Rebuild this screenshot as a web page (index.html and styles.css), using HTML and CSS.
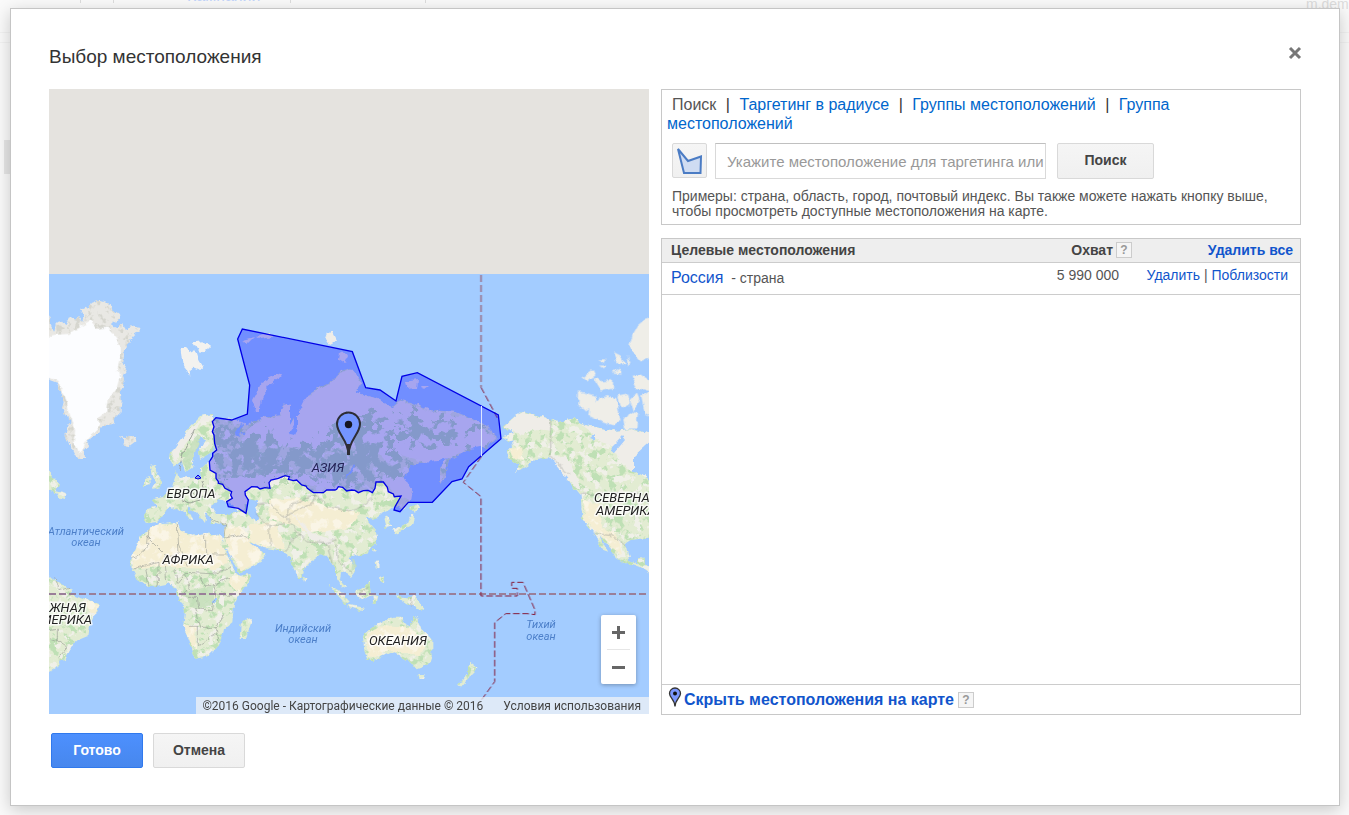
FILE: index.html
```html
<!DOCTYPE html>
<html lang="ru">
<head>
<meta charset="utf-8">
<title>Выбор местоположения</title>
<link rel="stylesheet" href="styles.css">
</head>
<body>
<div class="backdrop" aria-hidden="true">
  <span class="ghost ghost-link">Кампании</span>
  <span class="ghost ghost-user">m.dem</span>
  <i class="ghost-bar bar-a"></i><i class="ghost-bar bar-b"></i><i class="ghost-bar bar-c"></i><i class="ghost-bar bar-d"></i>
  <i class="ghost-rule"></i><i class="ghost-tab"></i>
</div>
<main class="dialog" role="dialog" aria-labelledby="title">
  <header class="dialog-head">
    <h1 id="title">Выбор местоположения</h1>
    <button class="close" type="button" aria-label="Закрыть"><svg width="14" height="14" viewBox="0 0 14 14"><path d="M2 2L12 12M12 2L2 12" stroke="#777" stroke-width="3"/></svg></button>
  </header>
  <div class="columns">
    <section class="map" aria-label="Карта">
      <svg class="map-art" viewBox="49 89 600 625" preserveAspectRatio="xMidYMid slice">
        <defs>
          <filter id="terrain" filterUnits="userSpaceOnUse" x="40" y="270" width="620" height="450" color-interpolation-filters="sRGB">
            <feTurbulence type="fractalNoise" baseFrequency=".12" numOctaves="4" seed="7" result="n"/>
            <feDisplacementMap in="SourceGraphic" in2="n" scale="6" xChannelSelector="R" yChannelSelector="G" result="land"/>
            <feColorMatrix in="n" values="0 0 0 0 .75  0 0 0 0 .88  0 0 0 0 .71  10 0 0 0 -5.2"/>
            <feComposite in2="land" operator="in" result="g"/>
            <feColorMatrix in="n" values="0 0 0 0 .94  0 0 0 0 .94  0 0 0 0 .91  0 12 0 0 -6.7"/>
            <feComposite in2="land" operator="in" result="w"/>
            <feMerge><feMergeNode in="land"/><feMergeNode in="g"/><feMergeNode in="w"/></feMerge>
          </filter>
          <filter id="dry" filterUnits="userSpaceOnUse" x="40" y="270" width="620" height="450" color-interpolation-filters="sRGB">
            <feTurbulence type="fractalNoise" baseFrequency=".1" numOctaves="4" seed="7" result="n"/>
            <feDisplacementMap in="SourceGraphic" in2="n" scale="6" xChannelSelector="R" yChannelSelector="G" result="land"/>
            <feColorMatrix in="n" values="0 0 0 0 .98  0 0 0 0 .96  0 0 0 0 .90  0 8 0 0 -4"/>
            <feComposite in2="land" operator="in" result="w"/>
            <feMerge><feMergeNode in="land"/><feMergeNode in="w"/></feMerge>
          </filter>
          <filter id="ice" filterUnits="userSpaceOnUse" x="40" y="270" width="620" height="450" color-interpolation-filters="sRGB">
            <feTurbulence type="fractalNoise" baseFrequency=".16" numOctaves="3" seed="3" result="n"/>
            <feDisplacementMap in="SourceGraphic" in2="n" scale="6" xChannelSelector="R" yChannelSelector="G" result="land"/>
            <feColorMatrix in="n" values="0 0 0 0 .84  0 0 0 0 .84  0 0 0 0 .81  7 0 0 0 -3.6"/>
            <feComposite in2="land" operator="in" result="g"/>
            <feMerge><feMergeNode in="land"/><feMergeNode in="g"/></feMerge>
          </filter>
          <filter id="rough" filterUnits="userSpaceOnUse" x="40" y="270" width="620" height="450">
            <feTurbulence type="fractalNoise" baseFrequency=".12" numOctaves="4" seed="7" result="n"/>
            <feDisplacementMap in="SourceGraphic" in2="n" scale="6" xChannelSelector="R" yChannelSelector="G"/>
          </filter>
          <filter id="patchy" filterUnits="userSpaceOnUse" x="40" y="270" width="620" height="450">
            <feTurbulence type="fractalNoise" baseFrequency=".09" numOctaves="5" seed="11" result="n"/>
            <feDisplacementMap in="SourceGraphic" in2="n" scale="40" xChannelSelector="R" yChannelSelector="G" result="p"/>
            <feColorMatrix in="n" values="0 0 0 0 0  0 0 0 0 0  0 0 0 0 0  0 0 14 0 -5.8"/>
            <feComposite in="p" operator="in"/>
          </filter>
        </defs>
        <rect x="49" y="89" width="600" height="185" fill="#e5e3df"/>
        <rect x="49" y="274" width="600" height="440" fill="#a3ccff"/>

        <g filter="url(#ice)">
          <g transform="translate(49 274) scale(.33333)" fill="#e9e8e4">
            <path d="M-20 120L8 135 5 150 15 170 20 150 35 140 50 150 60 130 75 135 80 145 90 125 100 140 105 125 90 105 105 98 120 105 125 90 150 80 185 90 190 105 210 120 213 135 200 140 185 150 205 165 220 150 225 165 250 155 270 158 272 170 250 185 235 215 225 240 222 270 235 290 220 300 228 330 215 350 218 380 215 400 215 415 200 430 190 450 160 460 145 480 125 490 115 515 103 530 105 555 90 555 75 540 60 510 50 480 55 455 68 440 50 425 40 400 45 380 35 350 20 325-20 310Z"/>
            <path d="M212 485L225 492 240 485 258 487 262 500 240 517 220 510 226 500z"/>
          </g>
        </g>
        <g filter="url(#rough)">
          <path transform="translate(49 274) scale(.33333)" fill="#f3f2ef" d="M395 222l20 0 8 15 15-8 10 30 12 20-10 10-18-8-10 8 2 20-12-25-12-15z M435 205L460 202 480 215 470 235 450 232z"/>
          <g transform="translate(449 274) scale(.33333)" fill="#efeee8">
            <path d="M565 155L585 138 610 130V250L578 265 560 245 540 222 553 175Z M495 235L515 245 530 272 508 268Z M533 250l15 12-10 12zM400 312L433 285 440 300 412 322Z M430 308L460 322 492 318 492 340 455 350Z M450 256l22 0-5 12zM490 298l20-14 5 18zM548 310L575 302 610 326V354L565 342Z M450 275l18 0-6 8z M390 352L442 365 434 395 412 412 388 392Z M422 398L452 372 475 363 502 373 515 442 490 454 450 440 418 425Z M508 368l30-6 5 27-27 14z M543 377l20-20 8 18-16 40z M577 368L610 348V428L588 418Z M541 415L567 420 562 464 528 464 523 440Z"/>
          </g>
          <path transform="translate(49 274) scale(.33333)" fill="#fcfdff" d="M-20 190L20 182 60 180 90 160 125 140 145 165 175 160 200 190 215 215 217 250 207 290 212 310 202 345 180 365 175 410 150 430 155 450 120 490 105 510 98 535 88 540 75 510 78 470 62 420 48 365 28 320-20 305Z"/>
        </g>

        <g filter="url(#terrain)" fill="#e2ecd2">
          <path d="M171 452L182 441 190 426 200 416 214 414V450L200 459 199 450 205 440 200 437 195 452 192 468 185 472 182 462 174 466 170 460Z"/>
          <path d="M146 509L157 507 154 499 163 497 172 487 177 471 179 479 192 478 202 476 201 469 207 463 210 461 215 450 212 418 232 420 248 426 246 432 238 432 245 435 243 427 262 418 280 415 285 403 290 405 290 425 296 415 305 405 307 395 315 390 330 382 340 372 350 368 362 382 355 392 375 398 392 408 400 400 410 402 430 410 455 412 470 418 485 425 497 437 488 447 475 445 465 452 450 460 445 478 440 484 440 468 452 453 425 462 412 465 403 480 412 490 410 500 403 510 395 505 389 510 379 515 374 519 365 517 369 522 376 530 377 542 369 552 352 557 347 558 356 570 351 577 346 573 341 572 340 580 346 588 341 586 336 578 336 567 331 563 327 555 321 554 312 560 304 570 302 577 299 579 294 570 291 558 284 553 279 550 264 548 249 542 252 547 266 553 259 563 249 568 240 573 229 554 222 544 225 525 211 522 209 515 206 512 204 523 196 512 188 506 193 521 190 520 185 512 178 508 167 509 162 517 157 522 149 523 145 520Z"/>
          <path d="M150 466L155 465 157 474 162 482 161 487 152 489 156 482 152 477Z M144 479l5-3 1 9-6 2z"/>
          <g transform="translate(49 494) scale(.33333)">
            <path d="M275 130L300 105 330 90 385 88 395 110 430 125 470 118 515 125 520 145 530 175 545 200 560 235 570 245 610 240 600 262 575 300 555 330 550 385 525 405 520 430 505 460 480 485 440 495 425 450 402 400 408 350 388 310 385 290 362 268 325 275 295 275 260 250 247 225 248 190 265 155Z M575 390L595 372 608 382 590 435 572 435Z"/>
            <path d="M-30 235L25 262 65 285 70 300 110 315 150 330 145 350 120 395 115 425 80 440 50 495 30 500 32 515-30 545Z"/>
            <path d="M-20-90L20-45 35-25 20-10-20-15Z M15-10L50 0 45 15 25 10Z"/>
          </g>
          <g transform="translate(249 480) scale(.33333)">
            <path d="M342 465L365 445 400 425 430 410 460 410 465 430 485 440 495 405 505 415 515 445 550 480V520L540 550 500 565 480 540 455 530 430 515 375 540 355 540 345 505Z M508 582L527 582 522 600 512 599Z M437 345L470 352 500 350 528 390 490 380 470 368Z M318 335L365 305 368 345 340 360 325 352Z M242 315L275 335 302 365 290 372 265 345Z M298 375L345 383 340 390 300 382Z M370 345L388 348 382 372 373 370Z M377 245L388 245 388 268 380 265Z M390 295L408 288 405 308 395 306Z M430 152L455 142 478 128 485 105 495 108 488 135 465 150 435 163Z M482 85L500 72 512 82 498 98Z M403 115L415 110 427 140 410 143Z M161 287L172 298 165 308Z M372 205l8 3-5 12z"/>
          </g>
          <g transform="translate(449 274) scale(.33333)">
            <path d="M165 455L200 425 225 412 305 435 330 445 380 430 395 450 440 460 500 470 545 465 610 480V495L555 545V590L610 620V790L545 798 530 808 540 858 565 868 575 848 590 848 590 870 610 890V905L570 878 500 853 490 828 450 783 475 830 460 825 433 778 400 738 395 663 360 620 340 580 300 550 260 555 240 570 195 600 215 570 175 550 175 530 200 500 180 505 160 490 195 480Z"/>
            <path d="M60 1163L85 1183 75 1198 60 1205Z M55 1198L62 1208 35 1240 25 1236Z"/>
          </g>
        </g>
        <g filter="url(#dry)" fill="#f5eed3">
          <path transform="translate(49 494) scale(.33333)" d="M275 132L300 107 330 92 383 91 395 112 430 127 470 120 513 127 520 145 530 175 540 205 500 225 400 222 330 215 250 225 250 190 265 155Z M540 250L598 243 570 300 545 270Z M405 390L440 400 440 470 425 450Z M110 318L148 333 140 360 120 350Z"/>
          <path d="M224 528L240 527 251 542 264 553 258 562 241 571 230 554Z M250 524L275 522 285 548 264 547 249 540Z M268 500L300 498 330 508 360 512 350 528 310 533 292 524 270 520Z"/>
          <path transform="translate(249 480) scale(.33333)" d="M348 470L400 435 470 440 500 460 530 485 515 525 470 520 430 510 380 530 358 530Z"/>
          <path transform="translate(449 274) scale(.33333)" d="M400 680L450 690 460 760 500 780 520 840 490 820 440 770 405 730Z M180 525L220 520 225 560 190 550Z"/>
        </g>
        <g filter="url(#rough)" fill="#efede8">
          <path transform="translate(449 274) scale(.33333)" d="M168 455L200 425 225 413 305 436 305 470 260 465 220 480 195 475Z M395 452L440 461 500 471 545 466 612 481V495L555 545V590L520 570 490 520 450 500 420 470Z M300 550L350 545 385 610 400 650 360 620Z"/>
          <path d="M245 432L262 419 280 416 285 403 290 405 290 425 300 410 307 396 315 391 330 383 340 373 350 369 361 382 355 392 375 398 392 408 400 401 430 411 470 419 496 437 485 446 465 450 450 458 425 462 400 455 390 465 370 445 320 450 280 445 240 440Z"/>
          <path d="M218 478L300 472 340 484 340 491 290 480 270 486 245 490 246 510 228 508 232 490Z M370 480L400 470 412 490 410 500 396 495 384 482Z"/>
          <path d="M290 510L312 540 334 545 332 540 314 534 298 518Z M172 452L190 428 205 416 214 415 214 420 200 423 184 445 175 463Z"/>
          <path d="M324 336l8-5 5 10-7 4zM340 352l8 4-3 7-6-4zM404 382l14-2-1 8-11 1zM422 386l6 1-4 3zM252 400L262 382 280 373 282 377 268 386 262 400 259 412 255 412Z M242 340l12-3-6 6zM256 336l14-3 2 4-10 2z"/>
        </g>
        <g filter="url(#patchy)" fill="#bedbb4">
          <path d="M216 430L262 436 300 448 320 440 350 418 380 415 395 440 405 470 395 478 340 484 285 474 260 478 222 474 216 450Z"/>
          <path d="M392 415L440 420 475 430 470 442 430 448 400 440Z"/>
        </g>
        <g filter="url(#rough)">
          <path fill="#c4dfba" d="M180 592L213 586 213 606 195 610Z M352 560l4 6-6 6zM182 462l14-28 5 3-11 31z" opacity=".8"/>
          <path fill="#a3ccff" d="M212 507L218 500 229 503 240 511 230 514 216 514Z M249 499L258 501 255 508 259 518 255 522 250 517 247 505Z M213 598l4 0 0 5-4 0zM610 448l12-12 3 4-10 12zM235 434l6-10 2 1-4 11zM345 478l7-6 3-8-8 10zM590 438l5-4 0 6zM289 434l6-9 0-14 3 2 0 14-4 8z"/>
        </g>

        <g class="borders" filter="url(#rough)">
          <path transform="translate(49 494) scale(.33333)" d="M300 105L295 160 265 185 248 190M295 130L350 185 390 180 385 90M390 150L415 215M470 118V180M470 180H530M250 225L290 215 330 205 330 240M345 195L350 265M375 225L385 265 410 235 500 240 545 220M325 240V275M290 225L300 275M410 240L420 280 400 310M455 245L470 275 495 275 500 300 490 350 450 345 445 310 410 310M500 300L550 305M440 345L455 400H500L525 360M445 400L445 455 470 440 500 420M500 400L510 440M495 275L540 250M420 400H450M0 410L25 405 25 440 0 430M20 250L30 290 60 280M25 440L55 460 30 490M530 90L525 130 570 120 600 135M480 70L530 95"/>
          <path transform="translate(249 480) scale(.33333)" d="M20 75L60 70 100 110 135 95 190 70 200 45 240 80 300 95 340 80 370 55M200 45L130 70 110 110 140 150 170 185 230 190 260 180M60 140L65 200M105 215L130 180 155 160M20 100L60 140 110 130M235 190L250 250M260 190L265 240 310 280M488 353V382M325 340L362 318"/>
          <path transform="translate(449 274) scale(.33333)" d="M305 435V550L325 570 360 600M395 660H600M435 778L490 785 530 815"/>
          <path d="M180 470L182 455 195 428M188 486L195 498 215 495M175 497L190 503 200 500M201 480L205 493"/>
        </g>

        <path class="equator" d="M49 594H649"/>
        <g transform="translate(449 274) scale(.33333)">
          <path class="date-line bold" d="M96 3V340"/>
          <path class="date-line" d="M96 340L147 435M97 548L43 625 96 668V966H205V943H188V925H222L258 1008V1022L235 1019H170L137 1046V1223L92 1285"/>
        </g>
        <path class="target" transform="translate(200 310) scale(.33333)" d="M113 87L127 57 457 125 497 233 540 240 588 273 606 199 652 188 895 315 903 386 806 470 786 507 756 515 697 577H625L600 605 582 600 585 590 603 558 583 560 580 552 565 545 562 532 550 516H528L525 535 517 548 505 541 490 542 475 548 465 541 455 540 440 543 428 532 415 530 410 538 405 540 380 540 370 548H340L322 535 318 528 305 525 290 510 280 512 265 508 268 500 255 497 235 505 213 510 207 518 210 535 195 533 180 537 172 531 155 530 135 545 136 555 145 570 138 610 115 595 85 590 80 575 97 565 92 555 95 545 75 535 68 523 55 520 55 515 48 505 48 490 30 480 28 455 38 440 38 430 50 420 44 400 42 375 37 365 42 350 37 335 48 323 95 330 142 312 149 225Z"/>
        <path class="target" d="M195 478l3-3 3 3-3 1z"/>
        <path d="M481.500 406V456" stroke="#dfe5ff"/>

        <g class="land-label">
          <text x="328" y="472" class="asia">АЗИЯ</text><text x="191" y="498">ЕВРОПА</text><text x="188" y="564">АФРИКА</text>
          <text x="398" y="645">ОКЕАНИЯ</text><text x="594" y="502" class="from-left">СЕВЕРНАЯ</text><text x="596" y="515" class="from-left">АМЕРИКА</text>
          <text x="86" y="612" class="to-right">ЮЖНАЯ</text><text x="92" y="624" class="to-right">АМЕРИКА</text>
        </g>
        <g class="sea-label">
          <text x="86" y="535">Атлантический</text><text x="86" y="546">океан</text><text x="303" y="632">Индийский</text><text x="303" y="643">океан</text><text x="541" y="628">Тихий</text><text x="541" y="640">океан</text>
        </g>
        <g>
          <path d="M348.500 455C348.500 440 337 434 337 424A11.500 11.500 0 0 1 360 424C360 434 348.500 440 348.500 455Z" fill="#7495ff" stroke="#2d2d35" stroke-width="2"/>
          <path d="M348.500 444V455" stroke="#2d2d35" stroke-width="3"/>
          <circle cx="348.500" cy="424.500" r="3.700" fill="#151520"/>
        </g>
      </svg>
      <div class="zoom">
        <button type="button" aria-label="Увеличить"><svg width="15" height="15" viewBox="0 0 15 15"><path d="M1 7.500H14M7.500 1V14" stroke="#666" stroke-width="3"/></svg></button>
        <button type="button" aria-label="Уменьшить"><svg width="15" height="15" viewBox="0 0 15 15"><path d="M1 7.500H14" stroke="#666" stroke-width="3"/></svg></button>
      </div>
      <div class="credits"><span>©2016 Google - Картографические данные © 2016</span><a href="#terms">Условия использования</a></div>
    </section>

    <div class="side">
      <section class="panel search">
        <nav class="tabs"><span class="tab">Поиск</span> | <a class="tab" href="#radius">Таргетинг в радиусе</a> | <a class="tab" href="#groups">Группы местоположений</a> | <a class="tab" href="#bulk">Группа местоположений</a></nav>
        <form class="search-row">
          <button class="btn shape" type="button" aria-label="Показать на карте"><svg width="27" height="28" viewBox="0 0 27 28"><path d="M2 2L12 14 25 9.500 24.500 26H8Z" fill="#cfdcf2" stroke="#4b7cc4" stroke-width="2"/></svg></button>
          <input class="query" type="text" aria-label="Местоположение" placeholder="Укажите местоположение для таргетинга или">
          <button class="btn find" type="button">Поиск</button>
        </form>
        <p class="hint">Примеры: страна, область, город, почтовый индекс. Вы также можете нажать кнопку выше, чтобы просмотреть доступные местоположения на карте.</p>
      </section>
      <section class="panel targets">
        <table>
          <thead><tr><th scope="col">Целевые местоположения</th><th scope="col" class="reach"><span class="with-help">Охват <button class="help" type="button">?</button></span></th><th scope="col" class="actions"><a href="#clear">Удалить все</a></th></tr></thead>
          <tbody><tr><td><a class="place" href="#russia">Россия</a>&nbsp; - страна</td><td class="reach">5 990 000</td><td class="actions"><a href="#remove">Удалить</a> | <a href="#nearby">Поблизости</a></td></tr></tbody>
        </table>
        <div class="toggle">
          <svg width="14" height="20" viewBox="0 0 14 20"><path d="M7 19.500C7 13 1.500 10.500 1.500 6.500A5.500 5.500 0 0 1 12.500 6.500C12.500 10.500 7 13 7 19.500Z" fill="#7b97ff" stroke="#333" stroke-width="1.300"/><circle cx="7" cy="6.500" r="2" fill="#111"/></svg>
          <a href="#hide">Скрыть местоположения на карте</a>
          <button class="help" type="button">?</button>
        </div>
      </section>
    </div>
  </div>
  <footer class="dialog-foot"><button class="btn primary" type="button">Готово</button><button class="btn" type="button">Отмена</button></footer>
</main>
</body>
</html>
```
FILE: styles.css
```css
* { box-sizing: border-box; }
body {
  margin: 0;
  padding: 8px 9px 9px 10px;
  background: #fafafa;
  color: #444;
  font: 14px/15px "Liberation Sans", Arial, sans-serif;
}
a { color: #15c; text-decoration: none; }
button { font: inherit; padding: 0; cursor: pointer; }

/* faded page behind the dialog */
.backdrop { position: absolute; inset: 0; overflow: hidden; }
.ghost { position: absolute; white-space: nowrap; font-size: 14px; color: #ddd; }
.ghost-link { left: 187px; top: -12px; font-size: 16px; color: #c3d5fb; }
.ghost-user { left: 1306px; top: -3px; }
.ghost-bar { position: absolute; top: 0; width: 1px; height: 3px; background: #ddd; }
.bar-a { left: 80px; }
.bar-b { left: 113px; }
.bar-c { left: 290px; }
.bar-d { left: 425px; }
.ghost-rule { position: absolute; left: 0; right: 0; top: 32px; height: 11px; border: solid #f2f2f2; border-width: 1px 0; }
.ghost-tab { position: absolute; left: 4px; top: 140px; width: 12px; height: 34px; background: #e6e6e6; }

.dialog {
  position: relative;
  padding: 0 38px 37px;
  background: #fff;
  border: 1px solid #c5c5c5;
  box-shadow: 0 4px 16px rgba(0, 0, 0, .2);
}
.dialog-head { display: flex; justify-content: space-between; padding: 36px 0 20px; height: 80px; }
h1 { margin: 0; font-size: 19px; line-height: 24px; font-weight: normal; color: #333; }
.close { border: 0; background: none; width: 14px; height: 14px; margin: 1px -1px 0 0; }
.close svg, .zoom svg { display: block; }

.columns { display: grid; grid-template-columns: 15fr 16fr; gap: 12px; }
.map { position: relative; align-self: start; min-height: 625px; overflow: hidden; background: #a3ccff; }
.map-art { display: block; width: 100%; height: 100%; }
.borders { fill: none; stroke: #8f938d; stroke-width: 2; stroke-opacity: .8; }
.borders > path:last-child { stroke-width: 1; }
.equator { fill: none; stroke: #9a7f99; stroke-width: 2; stroke-dasharray: 7 3; }
.date-line { fill: none; stroke: #851a38; stroke-width: 3; stroke-dasharray: 20 8; }
.date-line.bold { stroke: #9a7892; stroke-width: 5; stroke-dasharray: 21 9; }
.target { fill: rgba(0, 0, 255, .3); stroke: #0000e6; stroke-width: 4; }
.target + .target { stroke-width: 1; }
.land-label, .sea-label { font-family: Roboto, sans-serif; font-style: italic; text-anchor: middle; }
.land-label { font-size: 13px; fill: #222; stroke: rgba(255, 255, 255, .75); stroke-width: 3; paint-order: stroke; stroke-linejoin: round; }
.land-label .asia { stroke: none; fill: #242457; }
.land-label .from-left { text-anchor: start; }
.land-label .to-right { text-anchor: end; }
.sea-label { font-size: 11px; fill: #4c7fc9; }

.zoom {
  position: absolute;
  right: 13px;
  bottom: 30px;
  display: grid;
  padding: 0 6px;
  background: #fff;
  border-radius: 2px;
  box-shadow: 0 1px 4px rgba(0, 0, 0, .3);
}
.zoom button { display: grid; place-items: center; width: 23px; height: 34px; border: 0; background: none; }
.zoom button + button { height: 35px; border-top: 1px solid #e6e6e6; }
.credits {
  position: absolute;
  right: 0;
  bottom: 0;
  display: flex;
  gap: 20px;
  padding: 2px 8px 0 6px;
  background: rgba(245, 245, 245, .7);
  font-family: Roboto, sans-serif;
  font-size: 12px;
  white-space: nowrap;
}
.credits a { color: #444; }

.side { display: flex; flex-direction: column; gap: 13px; min-height: 626px; }
.panel { border: 1px solid #c8c8c8; background: #fff; }
.search { padding: 5px 10px; }
.tabs { margin-left: -5px; padding-right: 90px; font-size: 16px; line-height: 19px; color: #333; }
.tab { padding: 0 5px; }
span.tab { color: #555; }
.tabs a { color: #06c; }
.search-row { display: flex; margin: 10px 0; }
.btn {
  min-width: 92px;
  height: 35px;
  border: 1px solid #d9d9d9;
  border-radius: 2px;
  background: linear-gradient(#f5f5f5, #f0f0f0);
  color: #444;
  font-weight: bold;
}
.shape { display: grid; place-items: center; min-width: 35px; width: 35px; margin-right: 8px; }
.query {
  flex: 0 1 331px;
  min-width: 0;
  height: 36px;
  padding: 0 0 0 11px;
  border: 1px solid #d9d9d9;
  border-top-color: #c0c0c0;
  background: #fff;
  font: 15px "Liberation Sans", Arial, sans-serif;
}
.query::placeholder { color: #999; opacity: 1; }
.find { width: 97px; margin-left: 11px; height: 36px; padding-bottom: 2px; }
.hint { margin: 0; color: #555; }

.targets { display: flex; flex-direction: column; flex: 1; }
table { width: 100%; border-collapse: collapse; }
th { height: 23px; padding: 0 9px; background: #eee; border-bottom: 1px solid #ccc; text-align: left; }
td { height: 32px; padding: 0 9px; border-bottom: 1px solid #ccc; color: #555; }
.reach { text-align: right; }
th.reach { padding: 0; }
td.reach { padding: 0 13px 5px; }
.with-help { display: flex; justify-content: flex-end; align-items: center; gap: 3px; }
.actions { width: 168px; text-align: right; white-space: nowrap; }
th.actions { padding-right: 7px; }
td.actions { padding: 0 12px 5px 0; }
.place { font-size: 16px; }
.help {
  width: 16px;
  height: 16px;
  border: 1px solid #ccc;
  background: #f5f5f5;
  color: #999;
  font-size: 12px;
  line-height: 13px;
  font-weight: bold;
}
.toggle { display: flex; align-items: center; gap: 3px; margin-top: auto; height: 30px; padding-left: 6px; border-top: 1px solid #ccc; font-size: 16px; line-height: 18px; font-weight: bold; }
.toggle a { padding-top: 1px; }
.toggle svg { margin: 0 -1px 5px 0; }
.toggle .help { margin: 1px 0 0 1px; }
.dialog-foot { display: flex; gap: 10px; margin-top: 18px; padding-left: 2px; }
.primary { border-color: #3079ed; background: linear-gradient(#4d90fe, #4787ed); color: #fff; }
```
